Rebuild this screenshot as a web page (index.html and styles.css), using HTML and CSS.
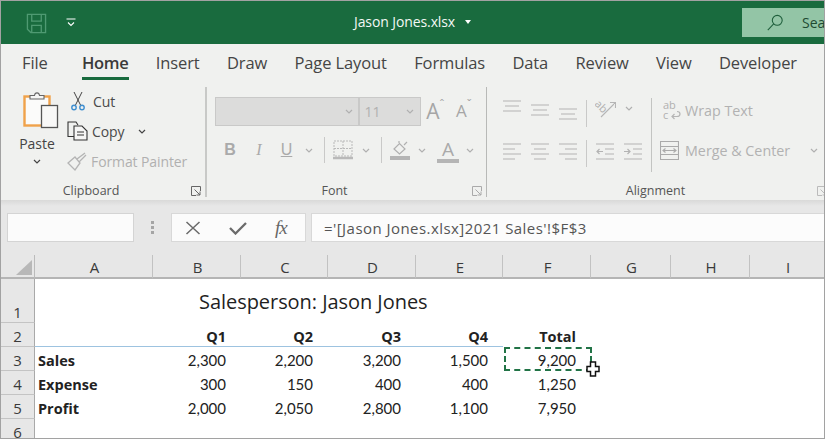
FILE: index.html
```html
<!DOCTYPE html>
<html lang="en">
<head>
<meta charset="utf-8">
<title>Jason Jones.xlsx</title>
<link rel="stylesheet" href="styles.css">
</head>
<body>
<div class="app">
  <header class="titlebar">
    <svg class="save" width="21" height="21" viewBox="0 0 22 22" fill="none" stroke="#4f9a72" stroke-width="1.4"><path d="M1.5 1.5H20.5V20.5H5L1.5 17Z"/><path d="M6 1.5V8.5H16V1.5M6 20.5V13H16V20.5"/></svg>
    <svg class="qat" width="10" height="10" viewBox="0 0 10 10" fill="none" stroke="#fff" stroke-width="1.1"><path d="M.5 1H9.5M2 4.5L5 7.5L8 4.5"/></svg>
    <div class="doc">Jason Jones.xlsx <span class="caret"></span></div>
    <div class="search">
      <svg width="18" height="18" viewBox="0 0 20 20" fill="none" stroke="#1f5f3c" stroke-width="1.2"><circle cx="12.5" cy="7" r="5.5"/><path d="M8.5 11L2 18"/></svg>
      <span>Sea</span>
    </div>
  </header>

  <nav class="tabs">
    <span class="tab first">File</span>
    <span class="tab active">Home</span>
    <span class="tab">Insert</span>
    <span class="tab">Draw</span>
    <span class="tab">Page Layout</span>
    <span class="tab">Formulas</span>
    <span class="tab">Data</span>
    <span class="tab">Review</span>
    <span class="tab">View</span>
    <span class="tab">Developer</span>
  </nav>

  <section class="ribbon">
    <div class="group g-clip">
      <div class="gbody clip-body">
        <div class="paste">
          <svg class="paste-ico" width="36" height="38" viewBox="0 0 36 38" fill="none">
            <rect x="1.5" y="5.5" width="25" height="29" fill="#fbfbfa" stroke="#f0a24a" stroke-width="2.4"/>
            <path d="M7 8V4.500H11.500C12 1 16 1 16.500 4.500H21V8Z" fill="#f6f6f5" stroke="#666" stroke-width="1.100"/>
            <rect x="18.500" y="14.500" width="16" height="22" fill="#f8f8f7" stroke="#555" stroke-width="1.300"/>
          </svg>
          <span>Paste</span>
          <svg class="chev dark" width="8" height="5" viewBox="0 0 8 5"><path d="M1 1L4 4L7 1"/></svg>
        </div>
        <div class="clip-list">
          <div class="clip-row">
            <svg width="16" height="20" viewBox="0 0 16 20" fill="none" stroke="#444" stroke-width="1"><path d="M4 1L10.500 14M12 1L5.500 14"/><circle cx="4" cy="16.500" r="2.200" stroke="#3f8fd0" stroke-width="1.400"/><circle cx="12" cy="16.500" r="2.200" stroke="#3f8fd0" stroke-width="1.400"/></svg>
            <span>Cut</span>
          </div>
          <div class="clip-row">
            <svg width="21" height="20" viewBox="0 0 21 20" fill="none" stroke="#333" stroke-width="1.100"><path d="M7 15.500H1V1H9L11 4"/><path d="M7 5H15L20 10V19H7Z" fill="#f6f6f5"/><path d="M10 11H17M10 14H17"/></svg>
            <span>Copy</span>
            <svg class="chev dark copy-chev" width="8" height="5" viewBox="0 0 8 5"><path d="M1 1L4 4L7 1"/></svg>
          </div>
          <div class="clip-row off">
            <svg width="20" height="19" viewBox="0 0 20 19" fill="none" stroke="#b4b4b4" stroke-width="1.300"><path d="M1 11L8 5L13 11L8 18Z"/><path d="M10 7L18 1M12 10L19 3"/></svg>
            <span>Format Painter</span>
          </div>
        </div>
      </div>
      <footer class="gfoot">
        <i></i><span>Clipboard</span>
        <svg class="launch" width="10" height="10" viewBox="0 0 10 10" fill="none" stroke="#666"><path d="M9.500 5V.5H.5V9.500H5M3.500 3.500L9 9M9 5.500V9H5.500"/></svg>
      </footer>
    </div>

    <div class="group g-font">
      <div class="gbody font-body">
        <div class="frow">
          <div class="combo c-name"><svg class="chev" width="8" height="5" viewBox="0 0 8 5"><path d="M1 1L4 4L7 1"/></svg></div>
          <div class="combo c-size"><span>11</span><svg class="chev" width="8" height="5" viewBox="0 0 8 5"><path d="M1 1L4 4L7 1"/></svg></div>
          <span class="grow">A<sup>&#710;</sup></span>
          <span class="shrink">A<sup>&#711;</sup></span>
        </div>
        <div class="frow row2">
          <b class="fmt b">B</b><i class="fmt it">I</i><u class="fmt un">U</u>
          <svg class="chev c-u" width="8" height="5" viewBox="0 0 8 5"><path d="M1 1L4 4L7 1"/></svg>
          <span class="vsep s1"></span>
          <svg class="bd" width="20" height="20" viewBox="0 0 20 20" fill="none" stroke="#b9b9b9"><path d="M1 1H19V16H1ZM10 1V16M1 8.500H19" stroke-dasharray="2 1"/><path d="M0 18H20" stroke-width="2.500"/></svg>
          <svg class="chev c-b" width="8" height="5" viewBox="0 0 8 5"><path d="M1 1L4 4L7 1"/></svg>
          <span class="vsep s2"></span>
          <svg class="fill" width="20" height="20" viewBox="0 0 20 20" fill="none" stroke="#b0b0b0" stroke-width="1.200"><path d="M4 9L9.500 3.500L15 9L9.500 14Z"/><path d="M9 3V1M14 5L17 2"/><rect x="0" y="16" width="20" height="4" fill="#b5b5b5" stroke="none"/></svg>
          <svg class="chev c-f" width="8" height="5" viewBox="0 0 8 5"><path d="M1 1L4 4L7 1"/></svg>
          <span class="fcolor">A</span>
          <svg class="chev c-c" width="8" height="5" viewBox="0 0 8 5"><path d="M1 1L4 4L7 1"/></svg>
        </div>
      </div>
      <footer class="gfoot">
        <i></i><span>Font</span>
        <svg class="launch light" width="10" height="10" viewBox="0 0 10 10" fill="none" stroke="#aaa"><path d="M9.500 5V.5H.5V9.500H5M3.500 3.500L9 9M9 5.500V9H5.500"/></svg>
      </footer>
    </div>

    <div class="group g-align">
      <div class="gbody align-body">
        <div class="align-left">
          <div class="arow">
            <svg class="al" width="18" height="20" viewBox="0 0 18 20"><path d="M0 1H18M2 6H16M0 11H18"/></svg>
            <svg class="al" width="18" height="20" viewBox="0 0 18 20"><path d="M0 5H18M2 10H16M0 15H18"/></svg>
            <svg class="al" width="18" height="20" viewBox="0 0 18 20"><path d="M0 9H18M2 14H16M0 19H18"/></svg>
            <span class="vsep tall"></span>
            <svg class="orient" width="21" height="21" viewBox="0 0 21 21" fill="none" stroke="#b5b5b5" stroke-width="1.100"><text class="icon-text" x="0" y="13" transform="rotate(45 6 9)">ab</text><path d="M6 20L20 6M15 5.500H20.500V11"/></svg>
            <svg class="chev o-c" width="8" height="5" viewBox="0 0 8 5"><path d="M1 1L4 4L7 1"/></svg>
          </div>
          <div class="arow">
            <svg class="al" width="18" height="17" viewBox="0 0 18 17"><path d="M0 1H18M0 6H12M0 11H18M0 16H12"/></svg>
            <svg class="al" width="18" height="17" viewBox="0 0 18 17"><path d="M0 1H18M3 6H15M0 11H18M3 16H15"/></svg>
            <svg class="al" width="18" height="17" viewBox="0 0 18 17"><path d="M0 1H18M6 6H18M0 11H18M6 16H18"/></svg>
            <span class="vsep tall"></span>
            <svg class="al ind" width="18" height="17" viewBox="0 0 18 17"><path d="M0 1H18M9 6H18M9 11H18M0 16H18M7 8.500H1M3.500 6L1 8.500L3.500 11"/></svg>
            <svg class="al ind2" width="18" height="17" viewBox="0 0 18 17"><path d="M0 1H18M9 6H18M9 11H18M0 16H18M0 8.500H6M3.500 6L6 8.500L3.500 11"/></svg>
          </div>
        </div>
        <span class="vsep big"></span>
        <div class="align-right">
          <div class="wrap-row">
            <svg width="18" height="20" viewBox="0 0 18 20" fill="none" stroke="#b5b5b5" stroke-width="1.200"><text class="icon-text" x="0" y="9">ab</text><text class="icon-text" x="0" y="19">c</text><path d="M9 16.500H14C18 16.500 18 11.500 14 11.500M11.500 14L9 16.500L11.500 19"/></svg>
            <span>Wrap Text</span>
          </div>
          <div class="merge-row">
            <svg width="19" height="19" viewBox="0 0 19 19" fill="none" stroke="#aaa" stroke-width="1.100"><path d="M.5.5H18.500V18.500H.5ZM.5 5.500H18.500M.5 13.500H18.500"/><path d="M3 9.500H16M5.500 7.500L3 9.500L5.500 11.500M13.500 7.500L16 9.500L13.500 11.500"/></svg>
            <span>Merge &amp; Center</span>
            <svg class="chev m-c" width="8" height="5" viewBox="0 0 8 5"><path d="M1 1L4 4L7 1"/></svg>
          </div>
        </div>
      </div>
      <footer class="gfoot align-foot">
        <i></i><span>Alignment</span>
        <svg class="launch light" width="10" height="10" viewBox="0 0 10 10" fill="none" stroke="#bbb"><path d="M9.500 5V.5H.5V9.500H5M3.500 3.500L9 9M9 5.500V9H5.500"/></svg>
      </footer>
    </div>
  </section>

  <section class="fbar">
    <div class="namebox"></div>
    <div class="dots"><i></i><i></i><i></i></div>
    <div class="fx-box">
      <svg width="16" height="14" viewBox="0 0 16 14" fill="none" stroke="#6a6a6a" stroke-width="1.500"><path d="M1.500 1L14.500 13M14.500 1L1.500 13"/></svg>
      <svg width="18" height="14" viewBox="0 0 18 14" fill="none" stroke="#6a6a6a" stroke-width="2.300"><path d="M1 7L6.500 12.500L17 2"/></svg>
      <span class="fx">fx</span>
    </div>
    <div class="finput">='[Jason Jones.xlsx]2021 Sales'!$F$3</div>
  </section>

  <section class="sheet">
    <div class="corner"><span></span></div>
    <div class="ch">A</div><div class="ch">B</div><div class="ch">C</div><div class="ch">D</div><div class="ch">E</div><div class="ch">F</div><div class="ch">G</div><div class="ch">H</div><div class="ch">I</div>

    <div class="rh r1">1</div>
    <div class="c"></div>
    <div class="c span title">Salesperson: Jason Jones</div>

    <div class="rh">2</div>
    <div class="c blue"></div>
    <div class="c num bold blue">Q1</div><div class="c num bold blue">Q2</div><div class="c num bold blue">Q3</div><div class="c num bold blue">Q4</div><div class="c num bold">Total</div>
    <div class="c rest"></div>

    <div class="rh">3</div>
    <div class="c bold">Sales</div>
    <div class="c num">2,300</div><div class="c num">2,200</div><div class="c num">3,200</div><div class="c num">1,500</div>
    <div class="c num copied">9,200
      <svg class="cursor" width="14" height="16" viewBox="0 0 14 16" fill="#fff" stroke="#111" stroke-width="1.500"><path d="M4.500 1H9.500V5.500H13V10.500H9.500V15H4.500V10.500H1V5.500H4.500Z"/></svg>
    </div>
    <div class="c rest"></div>

    <div class="rh">4</div>
    <div class="c bold">Expense</div>
    <div class="c num">300</div><div class="c num">150</div><div class="c num">400</div><div class="c num">400</div><div class="c num">1,250</div>
    <div class="c rest"></div>

    <div class="rh">5</div>
    <div class="c bold">Profit</div>
    <div class="c num">2,000</div><div class="c num">2,050</div><div class="c num">2,800</div><div class="c num">1,100</div><div class="c num">7,950</div>
    <div class="c rest"></div>

    <div class="rh">6</div>
    <div class="c wide"></div>
  </section>
</div>
</body>
</html>
```

FILE: styles.css
```css
* { box-sizing: border-box; }
html, body { margin: 0; padding: 0; background: #fff; }
.app {
  width: 825px; height: 439px; overflow: hidden;
  border: 1px solid #a2a2a2;
  display: flex; flex-direction: column;
  font-family: "Open Sans", "Noto Sans", sans-serif;
  color: #444;
}

/* title bar */
.titlebar {
  height: 43px; flex: none; background: #196b3e; position: relative;
  display: flex; align-items: center; color: #f3f8f5;
}
.save { margin-left: 25px; margin-top: 2px; }
.qat { margin-left: 19px; margin-top: 0; }
.doc {
  position: absolute; left: 353px; top: 11px;
  font-size: 14px; line-height: 19px; letter-spacing: -.1px;
  white-space: nowrap;
}
.caret {
  display: inline-block; width: 0; height: 0; margin-left: 6px; vertical-align: 3px;
  border-left: 3.500px solid transparent; border-right: 3.500px solid transparent; border-top: 4px solid #fff;
}
.search {
  margin-left: auto; width: 82px; height: 29px;
  background: #93c5a6; color: #1e4a32; white-space: nowrap;
  display: flex; align-items: center; gap: 18px; padding-left: 24px;
  font-size: 14px;
}
.search svg { flex: none; }

/* tabs */
.tabs {
  height: 38px; flex: none; background: #f0f1ef;
  display: flex; padding-left: 21px; gap: 27.250px;
}
.tab { font-size: 16.500px; line-height: 38px; letter-spacing: -.1px; color: #454545; height: 36px; white-space: nowrap; }
.tab.first { margin-right: 7px; }
.tab.active { font-weight: 600; color: #3a3a3a; border-bottom: 3px solid #196b3e; letter-spacing: -.3px; height: 36px; }

/* ribbon */
.ribbon {
  height: 118px; flex: none; background: #f0f1ef;
  display: flex; overflow: hidden;
}
.group { display: flex; flex-direction: column; margin-top: 5px; height: 110px; flex: none; }
.g-clip { width: 206px; border-right: 2px solid #c8c9c7; }
.g-font { width: 280px; border-right: 1px solid #b8b9b7; }
.g-align { flex: 1 1 0; min-width: 0; }
.gbody { flex: 1; min-height: 0; }
.gfoot {
  height: 18px; flex: none; display: grid; grid-template-columns: 1fr auto 1fr;
  margin-top: 3px; margin-bottom: -3px;
  align-items: center; font-size: 12.500px; line-height: 18px; color: #555; padding-right: 4px;
}
.gfoot span { margin-right: 20px; }
.gfoot .launch { justify-self: end; }
.gfoot i { display: block; }

.chev { fill: none; stroke: #b0b0b0; stroke-width: 1.200; flex: none; }
.chev.dark { stroke: #444; }
.icon-text { font-family: "Open Sans", sans-serif; font-size: 11px; fill: #b0b0b0; stroke: none; }

.clip-body { display: flex; padding-left: 16px; padding-top: 4px; }
.paste { width: 42px; display: flex; flex-direction: column; align-items: center; font-size: 14px; line-height: 19px; color: #444; }
.paste-ico { margin-left: 6px; flex: none; }
.paste span { margin-top: 5px; margin-left: -2px; }
.paste .chev { margin-top: 6px; margin-left: -2px; }
.clip-list { margin-left: 8px; margin-top: -5px; display: flex; flex-direction: column; }
.clip-row { height: 30px; display: flex; align-items: center; gap: 4px; font-size: 14px; color: #4a4a4a; white-space: nowrap; letter-spacing: -.1px; }
.clip-row svg:first-child { flex: none; }
.clip-row:first-child { padding-left: 3px; gap: 7px; }
.clip-row.off { color: #b0b0b0; }
.copy-chev { margin-left: 10px; }

.font-body { padding: 10px 0 0 8px; }
.frow { display: flex; align-items: flex-start; }
.combo { height: 29px; background: #dcdcdb; border: 1px solid #c9c9c8; display: flex; align-items: center; justify-content: space-between; }
.c-name { width: 145px; justify-content: flex-end; padding-right: 5px; }
.c-size { width: 62px; padding: 0 6px 0 4px; color: #b0b0b0; font-size: 14px; }
.grow, .shrink { font-weight: 400; color: #a6a6a6; line-height: 28px; display: flex; }
.grow { font-size: 21px; margin-left: 5px; width: 30px; }
.shrink { font-size: 17px; width: 30px; }
.grow sup, .shrink sup { font-size: 12px; line-height: 16px; margin-top: 0; vertical-align: baseline; }
.row2 { margin-top: 11px; align-items: center; height: 26px; }
.fmt { font-size: 16px; color: #aaa; font-family: "Liberation Sans", sans-serif; text-align: center; }
.fmt.b { width: 12px; margin-left: 9px; font-weight: 700; }
.fmt.it { width: 10px; margin-left: 18px; font-family: "Liberation Serif", serif; }
.fmt.un { width: 13px; margin-left: 16px; }
.c-u { margin-left: 12px; }
.vsep { width: 1px; background: #c9c9c8; flex: none; display: block; }
.s1 { height: 26px; margin-left: 11px; }
.bd { margin-left: 8px; }
.c-b { margin-left: 9px; }
.s2 { height: 26px; margin-left: 11px; }
.fill { margin-left: 8px; }
.c-f { margin-left: 8px; }
.fcolor { margin-left: 11px; width: 22px; text-align: center; font-size: 19px; line-height: 22px; height: 25px; color: #aaa; border-bottom: 4px solid #b5b5b5; }
.c-c { margin-left: 7px; }

.align-body { display: flex; padding-left: 16px; }
.align-left { width: 148px; padding-top: 13px; display: flex; flex-direction: column; gap: 19px; }
.arow { display: flex; align-items: flex-start; gap: 10px; height: 24px; }
.al { fill: none; stroke: #b3b3b3; stroke-width: 1.200; flex: none; }
.vsep.tall { height: 27px; margin-left: -1px; margin-right: -2px; }
.arow + .arow .vsep.tall { margin-top: -3px; }
.orient { margin-top: -3px; }
.o-c { margin-left: -1px; margin-top: 6px; }
.ind { margin-left: 1px; }
.vsep.big { height: 74px; margin-top: 11px; background: #c3c4c2; }
.align-right { padding: 10px 0 0 8px; font-size: 14.300px; color: #b2b2b2; }
.wrap-row, .merge-row { display: flex; align-items: center; white-space: nowrap; }
.wrap-row { height: 26px; padding-left: 3px; gap: 4px; }
.merge-row { height: 26px; margin-top: 14px; gap: 6px; }
.m-c { margin-left: 14px; }
.align-foot { padding-right: 0; width: 337px; }
.align-foot span { margin-right: 0; }
.align-foot .launch { transform: translateX(3px); }

/* formula bar */
.fbar {
  height: 55px; flex: none; display: flex; align-items: flex-start;
  background: linear-gradient(#d9d9d8 0, #e7e7e7 6px);
  padding: 13px 0 0 6px;
}
.namebox { width: 127px; height: 29px; background: #fbfbfb; border: 1px solid #d4d4d4; }
.dots { width: 37px; height: 29px; display: flex; flex-direction: column; align-items: center; justify-content: center; gap: 2px; }
.dots i { width: 3px; height: 3px; background: #a5a5a5; }
.fx-box { width: 135px; height: 29px; background: #fbfbfb; border: 1px solid #d8d8d8; display: flex; align-items: center; padding-left: 13px; gap: 28px; }
.fx { font-family: "Liberation Serif", serif; font-style: italic; font-weight: 400; font-size: 19px; letter-spacing: -1px; color: #666; }
.finput { margin-left: 5px; flex: 1; height: 29px; background: #fcfcfc; border: 1px solid #d8d8d8; border-right: 0; padding-left: 12px; font-size: 15px; letter-spacing: .45px; line-height: 28px; color: #555; white-space: nowrap; }

/* sheet */
.sheet {
  flex: 1; min-height: 0; background: #fff; overflow: hidden;
  display: grid;
  grid-template-columns: 34px 118px 88px 87px 88px 87px 88px 80px 79px 1fr;
  grid-template-rows: 24px 44px 24px 24px 24px 24px 24px;
  font-family: Lato, "Open Sans", sans-serif; font-size: 15px; color: #222;
}
.corner { background: #e7e7e7; border-right: 1px solid #bbb; border-bottom: 2px solid #b5b5b5; }
.corner span { display: block; width: 0; height: 0; margin: 5px 0 0 15px; border-left: 16px solid transparent; border-bottom: 15px solid #b8b8b8; }
.ch {
  background: #e7e7e7; border-right: 1px solid #c2c2c2; border-bottom: 2px solid #b5b5b5; padding-left: 2px;
  text-align: center; font-family: "Open Sans", sans-serif; font-size: 15px; line-height: 24px; color: #3a3a3a;
}
.ch:nth-child(10) { border-right: 0; }
.rh {
  grid-column: 1; background: #e7e7e7; border-right: 1px solid #a9a9a9; border-bottom: 1px solid #c4c4c4;
  text-align: center; font-family: "Open Sans", sans-serif; font-size: 15px; line-height: 26px; color: #3a3a3a;
}
.rh.r1 { line-height: 20px; padding-top: 23px; }
.c { line-height: 26px; padding: 0 3px; white-space: nowrap; }
.span { grid-column: 3 / -1; padding-left: 46px; }
.title { font-size: 20px; line-height: 46px; font-family: "Open Sans", sans-serif; letter-spacing: -.05px; color: #1f1f1f; }
.rest { grid-column: 8 / -1; }
.wide { grid-column: 2 / -1; }
.num { text-align: right; padding-right: 15px; }
.bold { font-weight: 700; font-family: "Open Sans", sans-serif; font-size: 14.500px; line-height: 27px; }
.blue { border-bottom: 1px solid #9dc3e0; }
.copied { position: relative; }
.copied::before {
  content: ""; position: absolute; left: 1px; top: 0; right: -1px; bottom: 0;
  border: 2px dashed #217346;
}
.cursor { position: absolute; right: -9px; bottom: -6px; }
```
